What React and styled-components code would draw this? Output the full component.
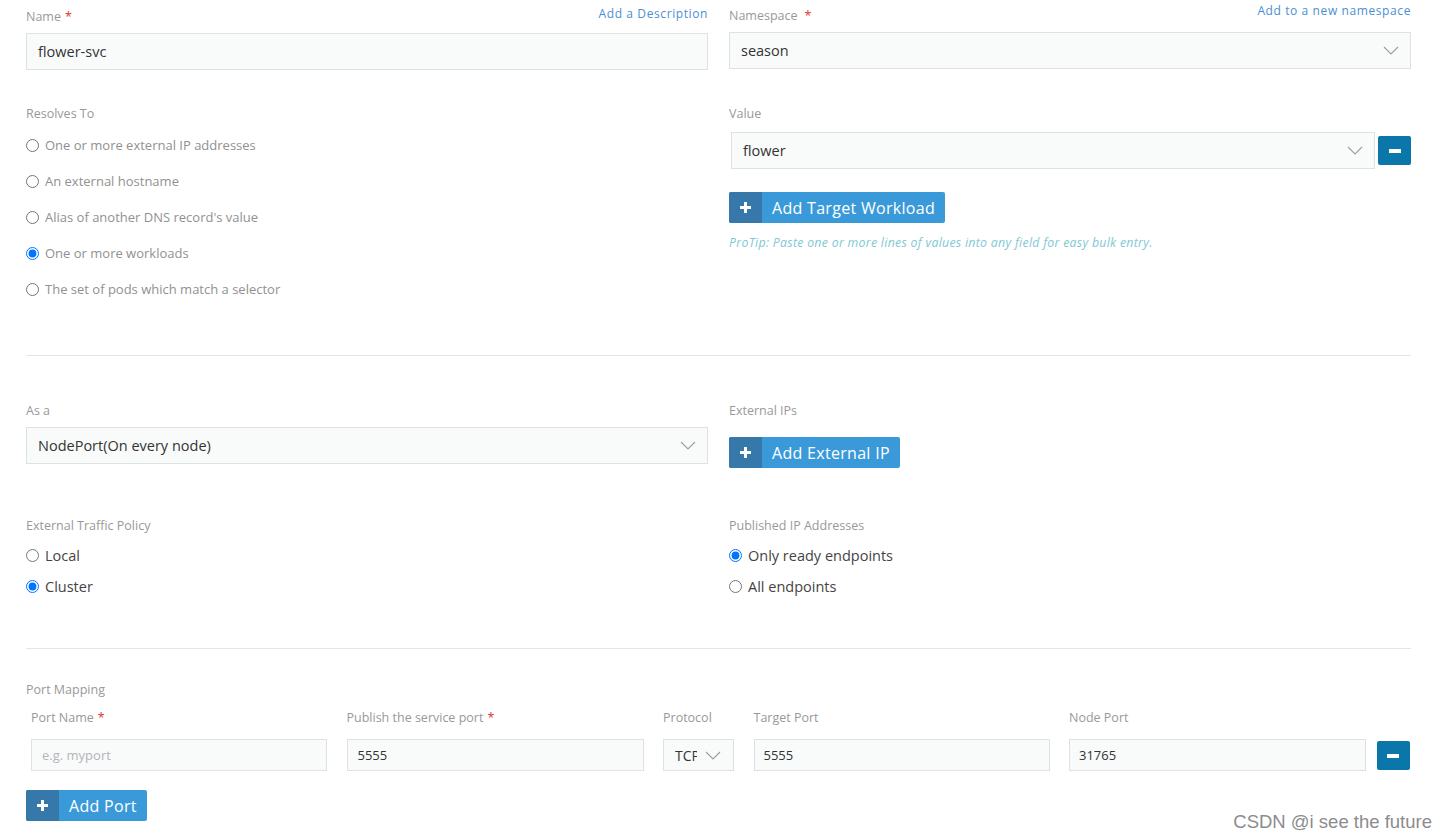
import React from "react";
import styled, { createGlobalStyle } from "styled-components";

const GlobalStyle = createGlobalStyle`
  html, body {
    margin: 0;
    padding: 0;
    background: #ffffff;
    overflow: hidden;
  }
  body {
    font-family: "Open Sans", "Noto Sans", sans-serif;
    color: #333;
  }
`;

const Page = styled.div`
  position: relative;
  width: 1446px;
  height: 837px;
  box-sizing: border-box;
  padding: 5px 35px 0 26px;
`;

const TwoCol = styled.div`
  display: grid;
  grid-template-columns: 682px 682px;
  column-gap: 21px;
`;

const Col = styled.div`
  display: flex;
  flex-direction: column;
`;

const Header = styled.div`
  display: flex;
  justify-content: space-between;
  align-items: flex-start;
  height: ${(p) => p.h || 28}px;
`;

const Label = styled.div`
  font-size: 12.5px;
  line-height: 20px;
  color: #999;
  margin-top: ${(p) => p.mt || 0}px;
`;

const Req = styled.span`
  color: #e2342f;
  margin-left: ${(p) => p.ml || 4}px;
`;

const Link = styled.a`
  font-size: 12px;
  line-height: 18px;
  color: #4a8fd4;
  letter-spacing: 0.6px;
  cursor: pointer;
`;

const Input = styled.div`
  box-sizing: border-box;
  height: ${(p) => p.h || 37}px;
  width: 100%;
  border: 1px solid #dde3e3;
  background: #f9fbfb;
  display: flex;
  align-items: center;
  justify-content: space-between;
  padding: 0 ${(p) => p.pr || 11}px 0 ${(p) => p.pl || 11}px;
  font-size: ${(p) => p.fs || 14.5}px;
  color: ${(p) => (p.placeholder ? "#b3b6b8" : "#333")};
  overflow: hidden;
  white-space: nowrap;
`;

const Clip = styled.span`
  display: block;
  width: ${(p) => p.w}px;
  overflow: hidden;
`;

const Chevron = () => (
  <svg width="16" height="9" viewBox="0 0 16 9">
    <polyline points="1,1 8,8 15,1" fill="none" stroke="#9a9ea0" strokeWidth="1.1" />
  </svg>
);

const SelectRow = styled.div`
  display: flex;
  align-items: center;
  gap: 3px;
  padding-left: 2px;
  margin-top: 8px;
`;

const MinusBtn = styled.button`
  flex: none;
  width: 33px;
  height: 29px;
  border: 0;
  border-radius: 2px;
  background: #0a76aa;
  display: flex;
  align-items: center;
  justify-content: center;
  padding: 0;
  cursor: pointer;
  &::after {
    content: "";
    width: 12px;
    height: 4px;
    background: #fff;
  }
`;

const AddBtn = styled.button`
  display: inline-flex;
  align-self: flex-start;
  height: 31px;
  padding: 0;
  border: 0;
  border-radius: 2px;
  overflow: hidden;
  background: #3a9ad9;
  color: #fff;
  font-family: inherit;
  font-size: 16px;
  letter-spacing: 0.3px;
  cursor: pointer;
  margin-top: ${(p) => p.mt || 0}px;
`;

const AddIcon = styled.span`
  width: 33px;
  height: 100%;
  background: #3578a9;
  display: flex;
  align-items: center;
  justify-content: center;
`;

const AddText = styled.span`
  display: flex;
  align-items: center;
  padding: 0 10px;
`;

const Plus = () => (
  <svg width="11" height="11" viewBox="0 0 11 11">
    <rect x="4" y="0" width="3" height="11" fill="#fff" />
    <rect x="0" y="4" width="11" height="3" fill="#fff" />
  </svg>
);

const Tip = styled.div`
  margin-top: 11px;
  font-size: 12.3px;
  letter-spacing: 0.3px;
  font-style: italic;
  color: #80c8d4;
`;

const RadioList = styled.div`
  display: flex;
  flex-direction: column;
  margin-top: ${(p) => p.mt || 0}px;
`;

const RadioRow = styled.label`
  display: flex;
  align-items: center;
  height: ${(p) => p.h}px;
  font-size: ${(p) => p.fs}px;
  color: ${(p) => p.color};
  gap: ${(p) => p.gap}px;
  input {
    margin: 0;
    width: 13px;
    height: 13px;
    accent-color: #0075ff;
  }
`;

const Divider = styled.hr`
  border: 0;
  border-top: 1px solid #e3e6e6;
  margin: ${(p) => p.mt}px 0 0 0;
  width: 1385px;
`;

const Section = styled.div`
  margin-top: ${(p) => p.mt || 0}px;
`;

const PortGrid = styled.div`
  display: grid;
  grid-template-columns: 296px 297px 71px 296px 297px 33px;
  column-gap: 19.5px;
  padding-left: 5px;
  margin-top: ${(p) => p.mt || 0}px;
  align-items: center;
`;

const PortLabel = styled.div`
  font-size: 12.5px;
  line-height: 20px;
  color: #999;
`;

const PortMinus = styled(MinusBtn)`
  margin-left: -9px;
  margin-top: 1px;
`;

const Watermark = styled.div`
  position: absolute;
  right: 14px;
  bottom: 4px;
  font-family: "Liberation Sans", Arial, sans-serif;
  font-size: 18.5px;
  color: #8c8c8c;
  text-shadow: 0 0 2px #fff;
`;

const resolves = [
  "One or more external IP addresses",
  "An external hostname",
  "Alias of another DNS record's value",
  "One or more workloads",
  "The set of pods which match a selector",
];

export default function App() {
  return (
    <>
      <GlobalStyle />
      <Page>
        <TwoCol>
          <Col>
            <Header>
              <Label mt={2}>
                Name<Req>*</Req>
              </Label>
              <Link>Add a Description</Link>
            </Header>
            <Input>flower-svc</Input>
            <Label mt={34}>Resolves To</Label>
            <RadioList mt={3}>
              {resolves.map((r, i) => (
                <RadioRow key={r} h={36} fs={13} color="#919191" gap={6}>
                  <input type="radio" name="resolves" defaultChecked={i === 3} />
                  {r}
                </RadioRow>
              ))}
            </RadioList>
          </Col>
          <Col>
            <Header h={27}>
              <Label mt={1}>
                Namespace<Req ml={7}>*</Req>
              </Label>
              <Link style={{ marginTop: -3 }}>Add to a new namespace</Link>
            </Header>
            <Input>
              season
              <Chevron />
            </Input>
            <Label mt={35}>Value</Label>
            <SelectRow>
              <Input>
                flower
                <Chevron />
              </Input>
              <MinusBtn />
            </SelectRow>
            <AddBtn mt={23}>
              <AddIcon>
                <Plus />
              </AddIcon>
              <AddText>Add Target Workload</AddText>
            </AddBtn>
            <Tip>ProTip: Paste one or more lines of values into any field for easy bulk entry.</Tip>
          </Col>
        </TwoCol>

        <Divider mt={48} />

        <Section mt={45}>
          <TwoCol>
            <Col>
              <Label>As a</Label>
              <Input style={{ marginTop: 6 }}>
                NodePort(On every node)
                <Chevron />
              </Input>
              <Label mt={52}>External Traffic Policy</Label>
              <RadioList mt={4}>
                <RadioRow h={31} fs={14.5} color="#444" gap={6}>
                  <input type="radio" name="policy" />
                  Local
                </RadioRow>
                <RadioRow h={31} fs={14.5} color="#444" gap={6}>
                  <input type="radio" name="policy" defaultChecked />
                  Cluster
                </RadioRow>
              </RadioList>
            </Col>
            <Col>
              <Label>External IPs</Label>
              <AddBtn mt={16}>
                <AddIcon>
                  <Plus />
                </AddIcon>
                <AddText>Add External IP</AddText>
              </AddBtn>
              <Label mt={48}>Published IP Addresses</Label>
              <RadioList mt={4}>
                <RadioRow h={31} fs={14.5} color="#444" gap={6}>
                  <input type="radio" name="published" defaultChecked />
                  Only ready endpoints
                </RadioRow>
                <RadioRow h={31} fs={14.5} color="#444" gap={6}>
                  <input type="radio" name="published" />
                  All endpoints
                </RadioRow>
              </RadioList>
            </Col>
          </TwoCol>
        </Section>

        <Divider mt={46} />

        <Section mt={31}>
          <Label>Port Mapping</Label>
          <PortGrid mt={8}>
            <PortLabel>
              Port Name<Req>*</Req>
            </PortLabel>
            <PortLabel>
              Publish the service port<Req>*</Req>
            </PortLabel>
            <PortLabel>Protocol</PortLabel>
            <PortLabel>Target Port</PortLabel>
            <PortLabel>Node Port</PortLabel>
            <span />
          </PortGrid>
          <PortGrid mt={11}>
            <Input h={32} fs={13} pl={10} placeholder>
              e.g. myport
            </Input>
            <Input h={32} fs={13} pl={10}>
              5555
            </Input>
            <Input h={32} fs={14} pl={11} pr={12}>
              <Clip w={22}>TCP</Clip>
              <Chevron />
            </Input>
            <Input h={32} fs={13} pl={9}>
              5555
            </Input>
            <Input h={32} fs={13} pl={9}>
              31765
            </Input>
            <PortMinus />
          </PortGrid>
          <AddBtn mt={19}>
            <AddIcon>
              <Plus />
            </AddIcon>
            <AddText>Add Port</AddText>
          </AddBtn>
        </Section>

        <Watermark>CSDN @i see the future</Watermark>
      </Page>
    </>
  );
}
